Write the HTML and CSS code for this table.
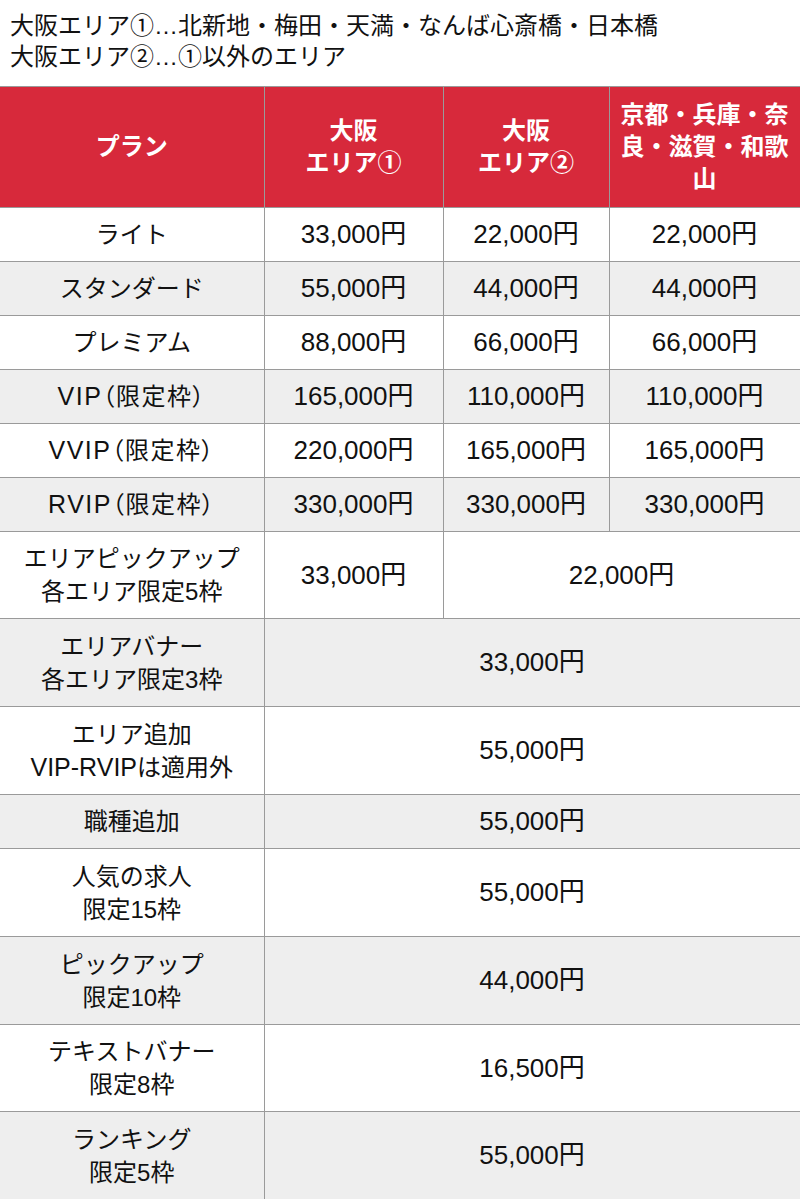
FILE: index.html
```html
<!DOCTYPE html>
<html lang="ja">
<head>
<meta charset="utf-8">
<link rel="stylesheet" href="styles.css">
</head>
<body>
<div class="notes">
  <p>大阪エリア①…北新地・梅田・天満・なんば心斎橋・日本橋</p>
  <p>大阪エリア②…①以外のエリア</p>
</div>
<table class="price">
  <colgroup>
    <col class="c1"><col class="c2"><col class="c3"><col class="c4">
  </colgroup>
  <thead>
    <tr class="head">
      <th>プラン</th>
      <th>大阪<br>エリア①</th>
      <th>大阪<br>エリア②</th>
      <th>京都・兵庫・奈良・滋賀・和歌山</th>
    </tr>
  </thead>
  <tbody>
    <tr class="r1"><td>ライト</td><td class="p">33,000円</td><td class="p">22,000円</td><td class="p">22,000円</td></tr>
    <tr class="r1 alt"><td>スタンダード</td><td class="p">55,000円</td><td class="p">44,000円</td><td class="p">44,000円</td></tr>
    <tr class="r1"><td>プレミアム</td><td class="p">88,000円</td><td class="p">66,000円</td><td class="p">66,000円</td></tr>
    <tr class="r1 alt"><td class="pl"><span class="lat">VIP</span>（限定枠）</td><td class="p">165,000円</td><td class="p">110,000円</td><td class="p">110,000円</td></tr>
    <tr class="r1"><td class="pl"><span class="lat">VVIP</span>（限定枠）</td><td class="p">220,000円</td><td class="p">165,000円</td><td class="p">165,000円</td></tr>
    <tr class="r1 alt"><td class="pl"><span class="lat">RVIP</span>（限定枠）</td><td class="p">330,000円</td><td class="p">330,000円</td><td class="p">330,000円</td></tr>
    <tr class="r2s"><td>エリアピックアップ<br>各エリア限定5枠</td><td class="p">33,000円</td><td class="p" colspan="2">22,000円</td></tr>
    <tr class="r2 alt"><td>エリアバナー<br>各エリア限定3枠</td><td class="p" colspan="3">33,000円</td></tr>
    <tr class="r2"><td>エリア追加<br><span class="lat">VIP-RVIP</span>は適用外</td><td class="p" colspan="3">55,000円</td></tr>
    <tr class="r1 alt"><td>職種追加</td><td class="p" colspan="3">55,000円</td></tr>
    <tr class="r2"><td>人気の求人<br>限定15枠</td><td class="p" colspan="3">55,000円</td></tr>
    <tr class="r2 alt"><td>ピックアップ<br>限定10枠</td><td class="p" colspan="3">44,000円</td></tr>
    <tr class="r2s"><td>テキストバナー<br>限定8枠</td><td class="p" colspan="3">16,500円</td></tr>
    <tr class="r2 alt"><td>ランキング<br>限定5枠</td><td class="p" colspan="3">55,000円</td></tr>
  </tbody>
</table>
</body>
</html>
```
FILE: styles.css
```css
html, body {
  margin: 0;
  padding: 0;
  background: #ffffff;
}
body {
  font-family: "Liberation Sans", "Noto Sans CJK JP", sans-serif;
  color: #111111;
  width: 800px;
}
.notes {
  padding: 10px 0 0 10px;
  height: 76px;
}
.notes p {
  margin: 0;
  font-size: 24px;
  line-height: 31px;
  white-space: nowrap;
}
.price {
  width: 800px;
  border-collapse: collapse;
  table-layout: fixed;
  font-size: 24px;
}
.c1 { width: 264px; }
.c2 { width: 179px; }
.c3 { width: 166px; }
.c4 { width: 191px; }
.price th,
.price td {
  border: 1px solid #9a9a9a;
  text-align: center;
  vertical-align: middle;
  padding: 0 6px;
}
.price tr > :first-child { border-left: none; }
.price tbody tr:last-child td { border-bottom: none; }
.head th {
  background: #d7293b;
  color: #ffffff;
  font-weight: bold;
  height: 120px;
  line-height: 32px;
  padding: 0 10px;
}
.price td { line-height: 33px; }
.price td.p { font-size: 26px; }
.price td.pl {
  font-feature-settings: "palt";
  letter-spacing: 1.5px;
}
.lat { font-size: 25px; }
.r1 td { height: 53px; }
.r2 td { height: 87px; }
.r2s td { height: 86px; }
.alt td { background: #eeeeee; }
```
